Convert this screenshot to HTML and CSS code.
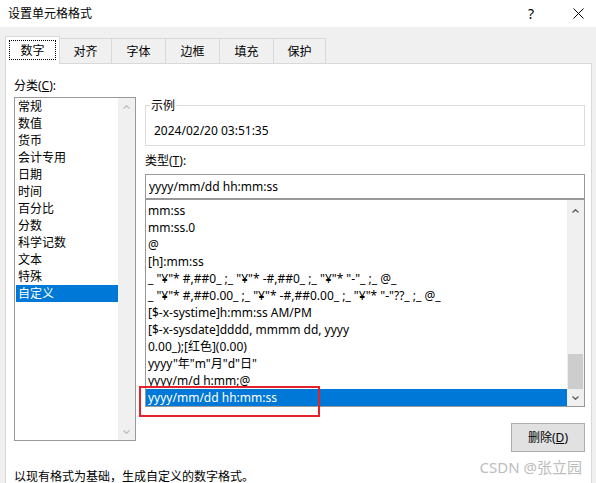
FILE: index.html
```html
<!DOCTYPE html>
<html lang="zh-CN">
<head>
<meta charset="utf-8">
<title>设置单元格格式</title>
<link rel="stylesheet" href="styles.css">
</head>
<body>
<div class="titlebar">
  <span class="title">设置单元格格式</span>
  <span class="help">?</span>
  <span class="close"><svg width="11" height="11" viewBox="0 0 11 11"><path d="M0.5 0.5L10.5 10.5M10.5 0.5L0.5 10.5" stroke="#000" stroke-width="1" fill="none"/></svg></span>
</div>
<div class="tabs">
  <div class="tab active"><span class="focus">数字</span></div>
  <div class="tab w52">对齐</div>
  <div class="tab w54">字体</div>
  <div class="tab w54">边框</div>
  <div class="tab w54">填充</div>
  <div class="tab w52">保护</div>
</div>
<div class="panel">
  <div class="cols">
    <div class="left">
      <div class="label">分类(<u>C</u>):</div>
      <div class="listbox cat">
        <ul class="items">
          <li>常规</li>
          <li>数值</li>
          <li>货币</li>
          <li>会计专用</li>
          <li>日期</li>
          <li>时间</li>
          <li>百分比</li>
          <li>分数</li>
          <li>科学记数</li>
          <li>文本</li>
          <li>特殊</li>
          <li class="sel">自定义</li>
        </ul>
        <div class="scrollbar disabled">
          <span class="arrow"><svg width="7" height="4" viewBox="0 0 7 4"><path d="M0.5 3.5L3.5 0.7L6.5 3.5" fill="none" stroke-width="1.3"/></svg></span>
          <span class="track"></span>
          <span class="arrow"><svg width="7" height="4" viewBox="0 0 7 4"><path d="M0.5 0.5L3.5 3.3L6.5 0.5" fill="none" stroke-width="1.3"/></svg></span>
        </div>
      </div>
    </div>
    <div class="right">
      <fieldset class="sample">
        <legend>示例</legend>
        <div class="sample-text">2024/02/20 03:51:35</div>
      </fieldset>
      <div class="label type-label">类型(<u>T</u>):</div>
      <input class="type-input" type="text" value="yyyy/mm/dd hh:mm:ss">
      <div class="listbox fmt">
        <ul class="items">
          <li>mm:ss</li>
          <li>mm:ss.0</li>
          <li>@</li>
          <li>[h]:mm:ss</li>
          <li>_ "¥"* #,##0_ ;_ "¥"* -#,##0_ ;_ "¥"* "-"_ ;_ @_ </li>
          <li>_ "¥"* #,##0.00_ ;_ "¥"* -#,##0.00_ ;_ "¥"* "-"??_ ;_ @_ </li>
          <li>[$-x-systime]h:mm:ss AM/PM</li>
          <li>[$-x-sysdate]dddd, mmmm dd, yyyy</li>
          <li>0.00_);[红色](0.00)</li>
          <li>yyyy"年"m"月"d"日"</li>
          <li>yyyy/m/d h:mm;@</li>
          <li class="sel">yyyy/mm/dd hh:mm:ss</li>
        </ul>
        <div class="scrollbar">
          <span class="arrow up"><svg width="7" height="4" viewBox="0 0 7 4"><path d="M0.5 3.5L3.5 0.7L6.5 3.5" fill="none" stroke-width="1.3"/></svg></span>
          <span class="track"><span class="thumb"></span></span>
          <span class="arrow"><svg width="7" height="4" viewBox="0 0 7 4"><path d="M0.5 0.5L3.5 3.3L6.5 0.5" fill="none" stroke-width="1.3"/></svg></span>
        </div>
      </div>
      <div class="actions"><button class="btn" type="button">删除(<u>D</u>)</button></div>
    </div>
  </div>
  <div class="desc">以现有格式为基础，生成自定义的数字格式。</div>
  <div class="watermark">CSDN @张立园</div>
</div>
<div class="highlight-box"></div>
</body>
</html>
```
FILE: styles.css
```css
* { box-sizing: border-box; }
html, body { margin: 0; padding: 0; }
body {
  width: 596px;
  height: 483px;
  overflow: hidden;
  position: relative;
  background: #f0f0f0;
  font-family: "Noto Sans", "Noto Sans CJK SC", sans-serif;
  font-size: 12px;
  color: #000;
}
u { text-decoration: underline; text-underline-offset: 1px; }

/* title bar */
.titlebar {
  height: 27px;
  background: #fff;
  display: flex;
  align-items: center;
  padding-left: 8px;
}
.title { flex: 1; line-height: 17px; font-size: 12px; }
.help {
  width: 14px;
  margin-right: 25px;
  text-align: center;
  font-size: 14px;
  line-height: 17px;
  font-family: "Noto Sans", sans-serif;
}
.close {
  width: 30px;
  margin-right: 3px;
  height: 27px;
  display: flex;
  align-items: center;
  justify-content: center;
}

/* tabs */
.tabs {
  margin-top: 9px;
  height: 28px;
  padding-left: 5px;
  display: flex;
  align-items: flex-end;
  position: relative;
  z-index: 1;
  margin-bottom: -1px;
}
.tab {
  height: 25px;
  margin-bottom: 1px;
  border-top: 1px solid #d9d9d9;
  border-right: 1px solid #d9d9d9;
  background: #f0f0f0;
  display: flex;
  align-items: center;
  justify-content: center;
  line-height: 17px;
  padding-top: 1px;
}
.tab.w52 { width: 52px; }
.tab.w54 { width: 54px; }
.tab.active {
  width: 55px;
  height: 28px;
  margin-bottom: 0;
  background: #fff;
  border: 1px solid #d9d9d9;
  border-bottom: none;
  padding: 3px 3px 4px 3px;
  display: flex;
}
.focus {
  flex: 1;
  height: 20px;
  border: 1px dotted #000;
  display: flex;
  align-items: center;
  justify-content: center;
  line-height: 17px;
}

/* panel */
.panel {
  position: relative;
  margin-left: 5px;
  width: 587px;
  height: 440px;
  background: #fff;
  border: 1px solid #d9d9d9;
  padding: 0 6px 0 8px;
}
.cols {
  display: flex;
  gap: 9px;
  padding-top: 13px;
  align-items: flex-start;
}
.label { line-height: 17px; }
.left { width: 122px; flex: none; }
.right { width: 440px; flex: none; }

.listbox {
  border: 1px solid #999;
  background: #fff;
  display: flex;
}
.listbox .items {
  list-style: none;
  margin: 0;
  padding: 0;
  flex: 1;
  min-width: 0;
  overflow: hidden;
}
.listbox li {
  height: 17px;
  line-height: 17px;
  white-space: pre;
  overflow: hidden;
}
.listbox li.sel { background: #0078d7; color: #fff; }

.cat { margin-top: 3px; height: 344px; }
.cat .items { padding-left: 1px; }
.cat li { padding-left: 2px; }

.fmt { height: 208px; }
.fmt .items { padding-top: 2px; }
.fmt li { padding-left: 2px; }

.scrollbar {
  width: 17px;
  flex: none;
  background: #f0f0f0;
  display: flex;
  flex-direction: column;
}
.scrollbar .arrow {
  height: 17px;
  display: flex;
  align-items: center;
  justify-content: center;
  stroke: #606060;
}
.scrollbar .arrow.up { padding-top: 4px; }
.scrollbar.disabled .arrow { stroke: #bfbfbf; }
.scrollbar .track {
  flex: 1;
  display: flex;
  flex-direction: column;
  justify-content: flex-end;
}
.scrollbar .thumb {
  height: 35px;
  margin: 0 1px;
  background: #cdcdcd;
}

/* sample group */
.sample {
  margin: 20px 0 0 0;
  padding: 0 0 6px 4px;
  border: 1px solid #dcdcdc;
  min-inline-size: 0;
}
.sample legend {
  padding: 0 1px;
  line-height: 17px;
}
.sample-text {
  margin-top: 8px;
  padding-left: 4px;
  line-height: 17px;
}
.type-label { margin-top: 6px; }
.type-input {
  display: block;
  margin: 5px 0 0 0;
  width: 440px;
  height: 25px;
  border: 1px solid #999;
  padding: 0 3px;
  font: inherit;
  color: #000;
  background: #fff;
  outline: none;
}

.actions {
  display: flex;
  justify-content: flex-end;
  margin-top: 16px;
}
.btn {
  width: 74px;
  height: 29px;
  background: #e1e1e1;
  border: 1px solid #adadad;
  font: inherit;
  color: #000;
  padding: 0;
  line-height: 17px;
}

.desc {
  margin-top: 16px;
  line-height: 17px;
  white-space: nowrap;
}

.watermark {
  position: absolute;
  right: 9px;
  top: 394px;
  font-size: 15px;
  line-height: 18px;
  color: #bdbdbd;
  font-family: "Noto Sans", "Noto Sans CJK SC", sans-serif;
}

.highlight-box {
  position: absolute;
  left: 139px;
  top: 386px;
  width: 181px;
  height: 31px;
  border: 2px solid #e3222a;
}
```
